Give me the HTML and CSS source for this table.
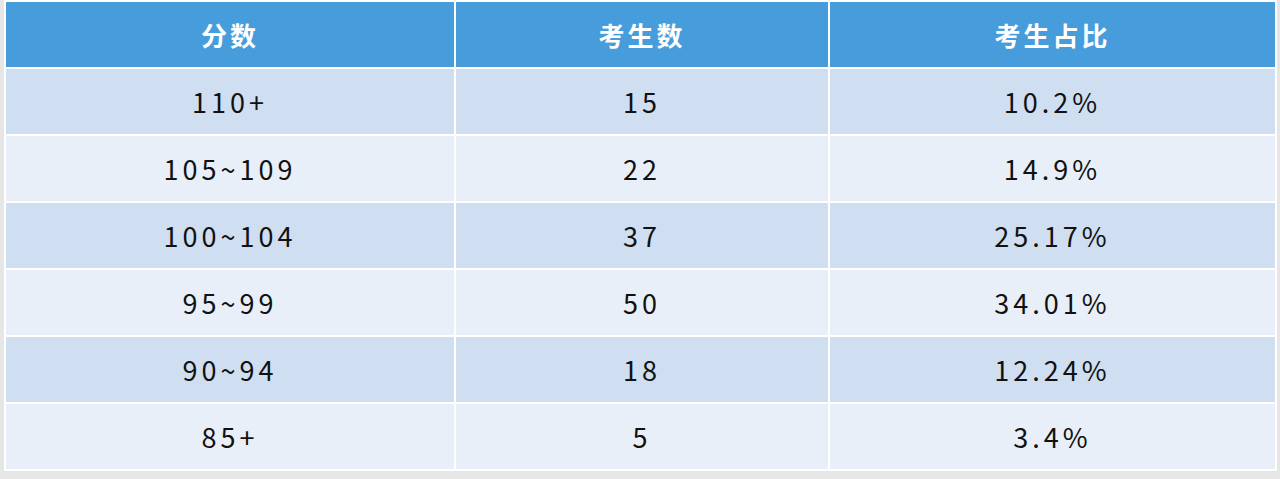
FILE: index.html
```html
<!DOCTYPE html>
<html lang="zh-CN">
<head>
<meta charset="utf-8">
<title>分数分布</title>
<link rel="stylesheet" href="styles.css">
</head>
<body>
<table class="score-table">
  <colgroup>
    <col class="c1"><col class="c2"><col class="c3">
  </colgroup>
  <thead>
    <tr><th>分数</th><th>考生数</th><th>考生占比</th></tr>
  </thead>
  <tbody>
    <tr class="dark"><td>110+</td><td>15</td><td>10.2%</td></tr>
    <tr class="light"><td>105~109</td><td>22</td><td>14.9%</td></tr>
    <tr class="dark"><td>100~104</td><td>37</td><td>25.17%</td></tr>
    <tr class="light"><td>95~99</td><td>50</td><td>34.01%</td></tr>
    <tr class="dark"><td>90~94</td><td>18</td><td>12.24%</td></tr>
    <tr class="light"><td>85+</td><td>5</td><td>3.4%</td></tr>
  </tbody>
</table>
</body>
</html>
```
FILE: styles.css
```css
html, body {
  margin: 0;
  padding: 0;
  background: #e6e6e6;
  height: 100%;
}
body {
  font-family: "Noto Sans CJK SC", "Noto Sans", sans-serif;
}
.score-table {
  margin-left: 4px;
  width: 1273px;
  table-layout: fixed;
  background: #ffffff;
  border-collapse: separate;
  border-spacing: 2px;
}
.c1 { width: 448px; }
.c2 { width: 372px; }
.c3 { width: 445px; }
.score-table th,
.score-table td {
  padding: 0;
  text-align: center;
  vertical-align: middle;
}
.score-table th {
  height: 65px;
  background: #479cdb;
  color: #ffffff;
  font-weight: 700;
  font-size: 26px;
  letter-spacing: 3px;
}
.score-table td {
  height: 65px;
  color: #111111;
  font-size: 27px;
  letter-spacing: 4px;
}
.dark td { background: #cfdef0; }
.light td { background: #e8eff8; }
```
